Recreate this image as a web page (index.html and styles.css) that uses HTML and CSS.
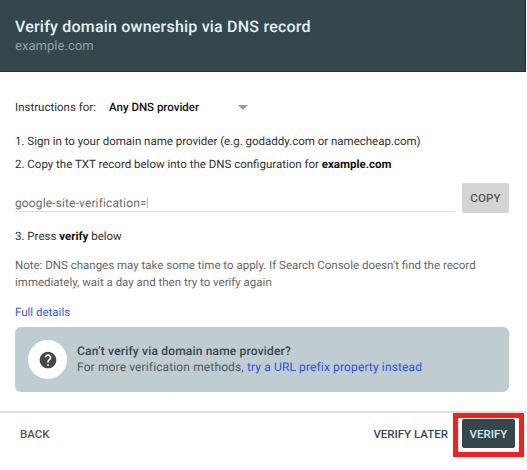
FILE: index.html
```html
<!DOCTYPE html>
<html lang="en">
<head>
<meta charset="utf-8">
<title>Verify domain ownership</title>
<link rel="stylesheet" href="styles.css">
</head>
<body>
<main class="dialog">
  <header class="header">
    <h1 class="title"><span>Verify domain ownership via DNS record</span></h1>
    <p class="domain"><span>example.com</span></p>
  </header>
  <section class="content">
    <div class="provider">
      <span class="provider-label">Instructions for:</span>
      <span class="provider-name">Any DNS provider</span>
      <svg class="caret" viewBox="0 0 10 5"><path d="M0 0h10L5 5z"/></svg>
    </div>
    <p class="step step-one"><span>1. Sign in to your domain name provider (e.g. godaddy.com or namecheap.com)</span></p>
    <p class="step step-two"><span>2. Copy the TXT record below into the DNS configuration for <b>example.com</b></span></p>
    <div class="record">
      <div class="record-value"><span>google-site-verification=</span><i class="cursor"></i></div>
      <button class="button copy">COPY</button>
    </div>
    <p class="step step-three"><span>3. Press <b>verify</b> below</span></p>
    <p class="note"><span>Note: DNS changes may take some time to apply. If Search Console doesn’t find the record<br>immediately, wait a day and then try to verify again</span></p>
    <a class="details">Full details</a>
    <aside class="help">
      <div class="help-icon">
        <svg viewBox="0 0 24 24"><path d="M12 2C6.48 2 2 6.48 2 12s4.480 10 10 10 10-4.480 10-10S17.520 2 12 2zm1 17h-2v-2h2v2zm2.070-7.750l-.9.920C13.450 12.900 13 13.500 13 15h-2v-.5c0-1.100.450-2.100 1.170-2.830l1.240-1.260c.370-.360.590-.860.590-1.410 0-1.100-.9-2-2-2s-2 .9-2 2H8c0-2.210 1.790-4 4-4s4 1.790 4 4c0 .880-.360 1.680-.930 2.250z"/></svg>
      </div>
      <div class="help-text">
        <strong>Can’t verify via domain name provider?</strong>
        <p>For more verification methods, <a>try a URL prefix property instead</a></p>
      </div>
    </aside>
  </section>
  <footer class="footer">
    <button class="button back">BACK</button>
    <button class="button later">VERIFY LATER</button>
    <div class="highlight"><button class="button verify">VERIFY</button></div>
  </footer>
</main>
</body>
</html>
```
FILE: styles.css
```css
* { box-sizing: border-box; }
body { margin: 0; background: #fff; font: 11.5px/16px Roboto, sans-serif; color: #303030; text-rendering: geometricPrecision; }
h1, p { margin: 0; }
b { font-weight: 700; color: #111; }
.dialog { width: 528px; height: 470px; display: flex; flex-direction: column; border-right: 1px solid #d4d6d9; }
.header { height: 72px; width: 526px; padding: 16px 15px 0; background: #33474d; border-bottom: 1px solid #123c3d; border-right: 1px solid #1c2447; }
.title { font-size: 16px; line-height: 21px; font-weight: 500; color: #e6f1f4; letter-spacing: .21px; white-space: nowrap; }
.domain { font-size: 13px; line-height: 20px; color: #91a1a5; letter-spacing: .05px; }
.content { height: 339px; padding: 27px 18px 0 15px; white-space: nowrap; }
.provider { display: flex; align-items: center; height: 16px; }
.provider-label { width: 94px; }
.provider-name { width: 129px; font-weight: 500; color: #111; }
.caret { width: 10px; height: 5px; fill: #999; }
.step-one { margin-top: 18px; }
.step-two { margin-top: 7px; }
.record { display: flex; margin-top: 11px; height: 30px; justify-content: space-between; }
.record-value { width: 440px; height: 29px; padding-top: 12px; border-bottom: 1px solid #dcdcdc; color: #6b6b6b; display: flex; font-size: 12px; letter-spacing: .13px; }
.cursor { width: 1px; height: 10px; margin-top: 3px; background: #bbb; }
.button { border: 0; border-radius: 2px; padding: 0; background: none; font: 500 11.5px/16px Roboto, sans-serif; color: #555; white-space: nowrap; }
.copy { width: 47px; height: 30px; background: #d4d4d4; letter-spacing: .15px; }
.step-three { margin-top: 15px; }
.note { margin-top: 13px; color: #666; line-height: 16.5px; }
.details { display: block; margin-top: 14px; color: #3158e5; }
.help { margin-top: 7px; height: 65px; border-radius: 6px; background: #bfcdd1; display: flex; align-items: center; padding-left: 13px; gap: 10px; }
.help-icon { width: 39px; height: 39px; border-radius: 50%; background: #fff; display: grid; place-items: center; }
.help-icon svg { width: 20px; height: 20px; fill: #484848; }
.help-text { padding-bottom: 2px; color: #4e5b5f; font-size: 12px; letter-spacing: .13px; }
.help-text strong { display: block; font-weight: 500; color: #354449; letter-spacing: .18px; }
.help-text a { color: #2952dd; }
.footer { flex: 1; border-top: 2px solid #dedede; display: flex; padding-left: 20px; align-items: flex-start; }
.back { margin: 13px auto 0 0; }
.later { margin: 13px 5px 0 0; color: #364950; }
.highlight { width: 71px; height: 44px; margin-right: 3px; border: 5px solid #fa1d19; padding: 1px 4px; }
.verify { width: 53px; height: 29px; background: #33474d; color: #dce9ec; }
```
